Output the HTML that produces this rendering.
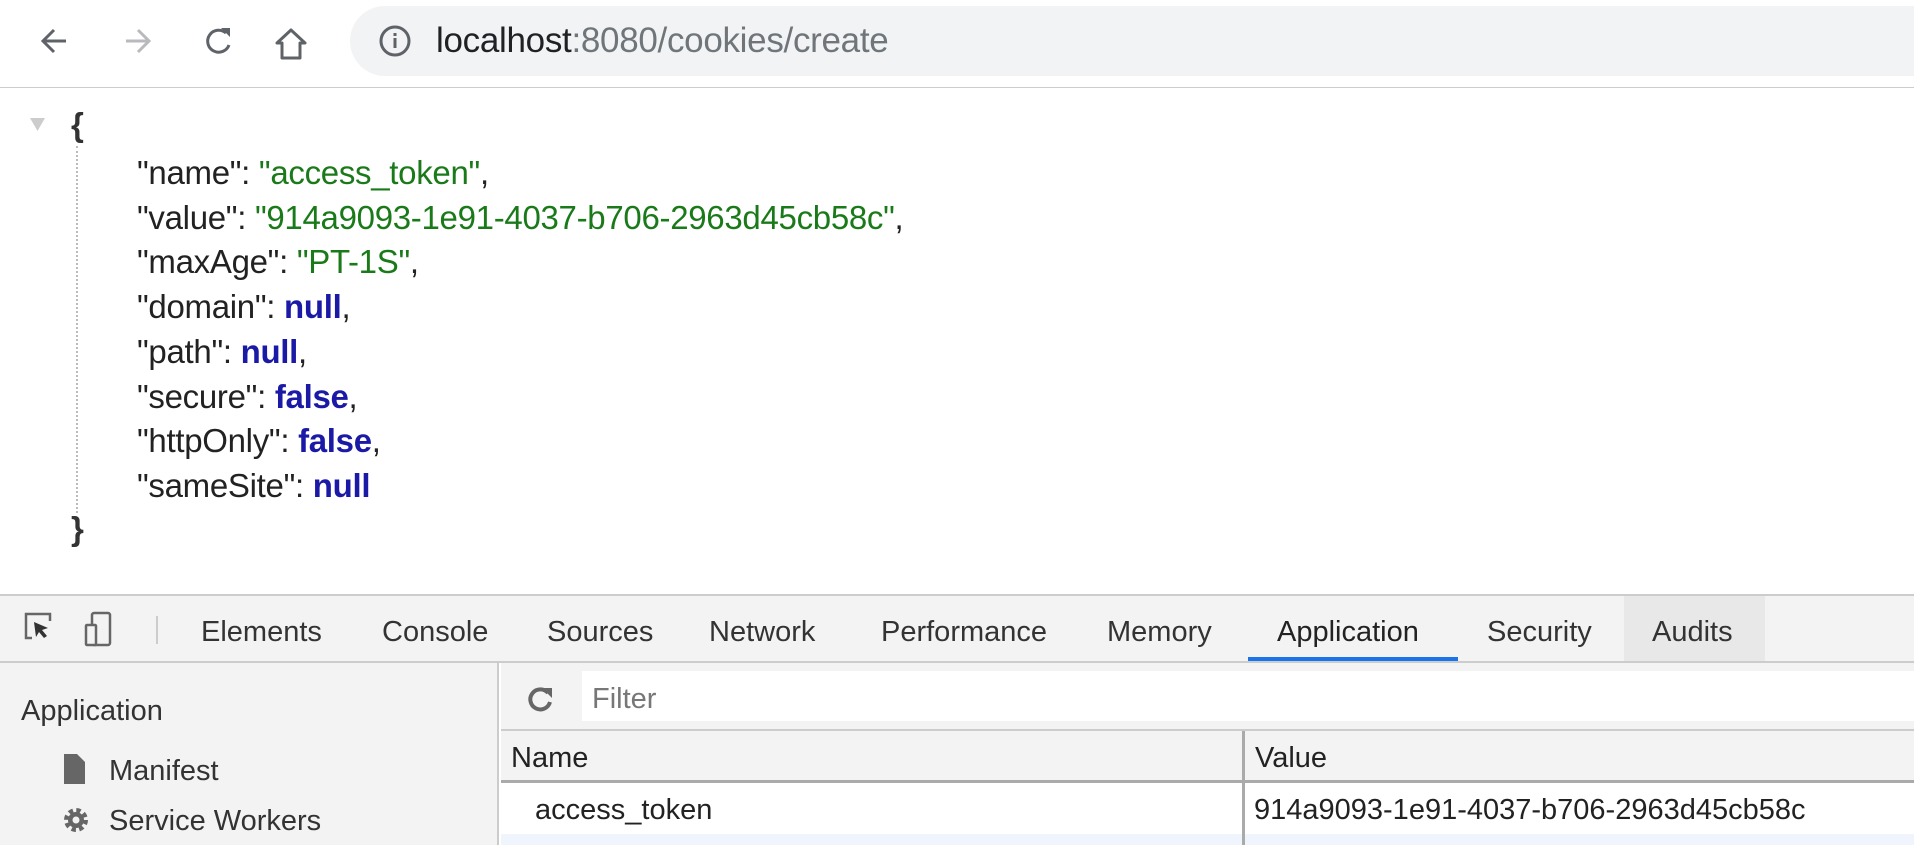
<!DOCTYPE html>
<html><head><meta charset="utf-8"><style>
*{margin:0;padding:0;box-sizing:border-box}
body{width:1914px;height:845px;overflow:hidden;background:#fff;font-family:"Liberation Sans",sans-serif;position:relative}
.a{position:absolute;white-space:nowrap}
.j{font-size:33px;color:#222;left:137px;line-height:45px;letter-spacing:-0.3px}
.s{color:#1a7a1a}.k{color:#1a1aa6;font-weight:bold}
.tab{font-size:29px;color:#333;top:616px}
.d{font-size:29px;color:#333}
</style></head><body>
<!-- toolbar -->
<div class="a" style="left:0;top:0;width:1914px;height:88px;background:#fff;border-bottom:1px solid #ccc"></div>
<svg class="a" style="left:36px;top:22px" width="300" height="40" viewBox="0 0 300 40">
<path d="M30 19H8M18 8L7 19l11 11" stroke="#5f6368" stroke-width="3" fill="none"/>
<path d="M90 19h22M102 8l11 11-11 11" stroke="#b8babd" stroke-width="3" fill="none"/>
<path d="M190 11a11 11 0 1 0 3 12" stroke="#5f6368" stroke-width="3" fill="none"/><path d="M185 6h9v9z" fill="#5f6368"/>
<path d="M246 36V21l-5 0 14-13 14 13h-5v15z" stroke="#5f6368" stroke-width="3" fill="none" stroke-linejoin="round"/>
</svg>
<div class="a" style="left:350px;top:6px;width:1600px;height:70px;background:#f1f3f4;border-radius:35px"></div>
<svg class="a" style="left:379px;top:25px" width="32" height="32" viewBox="0 0 32 32"><circle cx="16" cy="16" r="14" stroke="#5f6368" stroke-width="3" fill="none"/><rect x="14.5" y="13" width="3" height="10" fill="#5f6368"/><rect x="14.5" y="8" width="3" height="3" fill="#5f6368"/></svg>
<div class="a" style="left:436px;top:21px;font-size:35px;color:#202124;letter-spacing:-0.3px">localhost<span style="color:#70757a">:8080/cookies/create</span></div>
<!-- json -->
<svg class="a" style="left:30px;top:118px" width="16" height="14"><path d="M0 0h15L7.5 13z" fill="#ccc"/></svg>
<div class="a" style="left:71px;top:106px;font-size:33px;font-weight:bold;color:#333">{</div>
<div class="a" style="left:76px;top:146px;height:367px;border-left:2px dotted #bbb"></div>
<div class="a j" style="top:150px">"name": <span class="s">"access_token"</span>,</div>
<div class="a j" style="top:195px">"value": <span class="s">"914a9093-1e91-4037-b706-2963d45cb58c"</span>,</div>
<div class="a j" style="top:239px">"maxAge": <span class="s">"PT-1S"</span>,</div>
<div class="a j" style="top:284px">"domain": <span class="k">null</span>,</div>
<div class="a j" style="top:329px">"path": <span class="k">null</span>,</div>
<div class="a j" style="top:374px">"secure": <span class="k">false</span>,</div>
<div class="a j" style="top:418px">"httpOnly": <span class="k">false</span>,</div>
<div class="a j" style="top:463px">"sameSite": <span class="k">null</span></div>
<div class="a" style="left:71px;top:510px;font-size:33px;font-weight:bold;color:#333">}</div>
<!-- devtools -->
<div class="a" style="left:0;top:594px;width:1914px;height:69px;background:#f3f3f3;border-top:2px solid #ccc;border-bottom:2px solid #ccc"></div>
<div class="a" style="left:1624px;top:596px;width:141px;height:65px;background:#e8e8e8"></div>
<div class="a" style="left:1248px;top:657px;width:210px;height:4px;background:#1a73e8"></div>
<svg class="a" style="left:22px;top:610px" width="140" height="40" viewBox="0 0 140 40">
<path d="M10 28H4V4h24v7" stroke="#666" stroke-width="2.5" fill="none"/><path d="M12 12l14 6-6 2 5 6-3 2-5-6-3 5z" fill="#333"/>
<rect x="70" y="3" width="18" height="32" rx="2" stroke="#666" stroke-width="2.5" fill="none"/><rect x="64" y="15" width="10" height="20" rx="1" stroke="#666" stroke-width="2.5" fill="#f3f3f3"/>
<rect x="134" y="6" width="2" height="28" fill="#ccc"/>
</svg>
<div class="a tab" style="left:201px">Elements</div>
<div class="a tab" style="left:382px">Console</div>
<div class="a tab" style="left:547px">Sources</div>
<div class="a tab" style="left:709px">Network</div>
<div class="a tab" style="left:881px">Performance</div>
<div class="a tab" style="left:1107px">Memory</div>
<div class="a tab" style="left:1277px;color:#222">Application</div>
<div class="a tab" style="left:1487px">Security</div>
<div class="a tab" style="left:1652px">Audits</div>
<!-- sidebar -->
<div class="a" style="left:0;top:663px;width:499px;height:182px;background:#f3f3f3;border-right:2px solid #ccc"></div>
<div class="a d" style="left:21px;top:695px">Application</div>
<svg class="a" style="left:64px;top:754px" width="22" height="30"><path d="M0 0h13l8 8v22H0z" fill="#666"/></svg>
<div class="a d" style="left:109px;top:755px">Manifest</div>
<svg class="a" style="left:61px;top:805px" width="30" height="30" viewBox="0 0 30 30"><circle cx="15" cy="15" r="9" fill="none" stroke="#666" stroke-width="6" stroke-dasharray="4 3.07"/><circle cx="15" cy="15" r="8" fill="#666"/><circle cx="15" cy="15" r="3.5" fill="#f3f3f3"/></svg>
<div class="a d" style="left:109px;top:805px">Service Workers</div>
<!-- right pane -->
<div class="a" style="left:501px;top:663px;width:1413px;height:68px;background:#f3f3f3;border-bottom:2px solid #ccc"></div>
<svg class="a" style="left:527px;top:684px" width="28" height="28" viewBox="0 0 28 28"><path d="M21 9a10 10 0 1 0 2 9" stroke="#666" stroke-width="4" fill="none"/><path d="M15 4h10v10z" fill="#666"/></svg>
<div class="a" style="left:582px;top:671px;width:1332px;height:50px;background:#fff"></div>
<div class="a d" style="left:592px;top:683px;color:#777">Filter</div>
<div class="a" style="left:501px;top:731px;width:1413px;height:52px;background:#f3f3f3;border-bottom:3px solid #aaa"></div>
<div class="a d" style="left:511px;top:742px;color:#222">Name</div>
<div class="a d" style="left:1255px;top:742px;color:#222">Value</div>
<div class="a" style="left:501px;top:834px;width:1413px;height:11px;background:#f0f5fd"></div>
<div class="a" style="left:1242px;top:731px;width:3px;height:114px;background:#aaa"></div>
<div class="a d" style="left:535px;top:794px;color:#222">access_token</div>
<div class="a d" style="left:1254px;top:794px;color:#222">914a9093-1e91-4037-b706-2963d45cb58c</div>
</body></html>
